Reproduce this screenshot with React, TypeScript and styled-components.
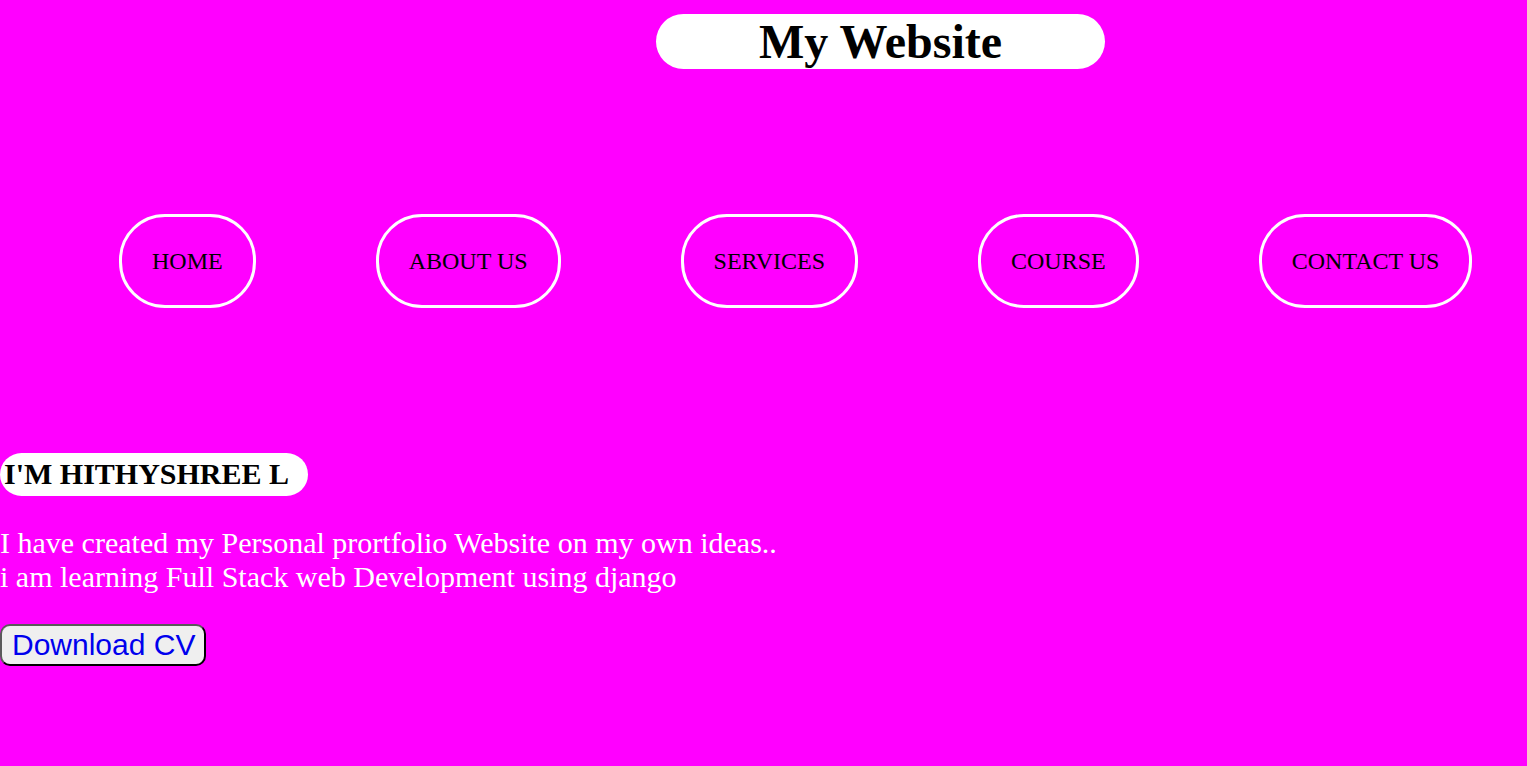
import React from "react";
import styled, { createGlobalStyle } from "styled-components";

const Global = createGlobalStyle`
  html, body {
    margin: 0;
    padding: 0;
    background: #ff00ff;
    font-family: "Liberation Serif", "Times New Roman", serif;
  }
`;

const Page = styled.div`
  min-height: 766px;
  background: #ff00ff;
  display: flex;
  flex-direction: column;
`;

const Header = styled.header`
  display: flex;
  padding-top: 14px;
  padding-left: 656px;
`;

const Title = styled.h1`
  margin: 0;
  width: 449px;
  height: 55px;
  background: #ffffff;
  border-radius: 28px;
  text-align: center;
  font-size: 48px;
  line-height: 55px;
  font-weight: bold;
  color: #000;
`;

const Nav = styled.ul`
  list-style: none;
  margin: 145px 0 0 0;
  padding: 0 0 0 119px;
  display: flex;
  gap: 120px;
`;

const NavItem = styled.li`
  display: flex;
`;

const NavLink = styled.a`
  display: block;
  border: 3px solid #ffffff;
  border-radius: 46px;
  padding: 30px 30px;
  font-size: 24px;
  line-height: 28px;
  color: #000;
  text-decoration: none;
  white-space: nowrap;
`;

const Intro = styled.section`
  margin-top: 145px;
  display: flex;
  flex-direction: column;
  align-items: flex-start;
`;

const Name = styled.h2`
  margin: 0;
  background: #ffffff;
  border-radius: 22px;
  padding: 4px 19px 5px 4px;
  font-size: 30px;
  line-height: 34px;
  font-weight: bold;
  color: #000;
`;

const Text = styled.p`
  margin: 30px 0 0 0;
  font-size: 30px;
  line-height: 34px;
  color: #ffffff;
`;

const CvButton = styled.button`
  margin-top: 30px;
  font-family: "Liberation Sans", Arial, sans-serif;
  font-size: 30px;
  line-height: 38px;
  color: #0000ee;
  background: #efefef;
  border: 2px solid;
  border-color: #5a5a5a #000 #000 #5a5a5a;
  border-radius: 10px;
  padding: 0 9px 0 10px;
  cursor: pointer;
`;

const links = ["HOME", "ABOUT US", "SERVICES", "COURSE", "CONTACT US"];

export default function App() {
  return (
    <>
      <Global />
      <Page>
        <Header>
          <Title>My Website</Title>
        </Header>
        <Nav>
          {links.map((l) => (
            <NavItem key={l}>
              <NavLink href="#">{l}</NavLink>
            </NavItem>
          ))}
        </Nav>
        <Intro>
          <Name>I'M HITHYSHREE L</Name>
          <Text>
            I have created my Personal prortfolio Website on my own ideas..
            <br />
            i am learning Full Stack web Development using django
          </Text>
          <CvButton>Download CV</CvButton>
        </Intro>
      </Page>
    </>
  );
}
